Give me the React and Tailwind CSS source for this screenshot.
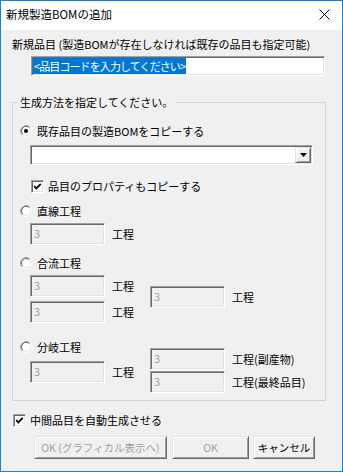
import React from "react";

// classic 3D edges
const sunken =
  "border border-t-[#a0a0a0] border-l-[#a0a0a0] border-r-white border-b-white shadow-[inset_1px_1px_0_#696969,inset_-1px_-1px_0_#e3e3e3]";
const raised =
  "border border-t-[#e3e3e3] border-l-[#e3e3e3] border-r-[#696969] border-b-[#696969] shadow-[inset_1px_1px_0_#fff,inset_-1px_-1px_0_#a0a0a0] bg-[#f0f0f0]";

const Radio = ({ checked, label }) => (
  <div className="flex items-center h-[16px] leading-[16px]">
    <svg width="12" height="12" viewBox="0 0 12 12" className="shrink-0">
      <circle cx="6" cy="6" r="5" fill="#fff" />
      <path d="M2.11 9.89 A5.5 5.5 0 0 1 9.89 2.11" fill="none" stroke="#a0a0a0" />
      <path d="M9.89 2.11 A5.5 5.5 0 0 1 2.11 9.89" fill="none" stroke="#ffffff" />
      <path d="M2.82 9.18 A4.5 4.5 0 0 1 9.18 2.82" fill="none" stroke="#696969" />
      <path d="M9.18 2.82 A4.5 4.5 0 0 1 2.82 9.18" fill="none" stroke="#e3e3e3" />
      {checked && <circle cx="6" cy="6" r="2" fill="#000" />}
    </svg>
    <span className="ml-[5px]">{label}</span>
  </div>
);

const Check = ({ label }) => (
  <div className="flex items-center h-[16px] leading-[16px]">
    <div className={`w-[13px] h-[13px] bg-white ${sunken} flex items-center justify-center shrink-0`}>
      <svg width="9" height="9" viewBox="0 0 9 9">
        <polyline points="1.2,4.2 3.3,6.4 7.8,1.8" fill="none" stroke="#000" strokeWidth="1.8" />
      </svg>
    </div>
    <span className="ml-[4px]">{label}</span>
  </div>
);

const Field = () => (
  <div className={`w-[75px] h-[22px] bg-[#f0f0f0] ${sunken} pl-[3px] pt-[1px] leading-[16px] text-[#a0a0a0] shrink-0`}>
    3
  </div>
);

export default function App() {
  return (
    <div className="w-[343px] h-[472px] border border-[#1883d7] flex flex-col font-['Noto_Sans_CJK_JP',sans-serif] text-[11px] text-black overflow-hidden">
      <div className="h-[29px] bg-white flex items-center justify-between pl-[5px] pr-[12px] pb-[3px] shrink-0">
        <span className="text-[11.5px] leading-[16px]">新規製造BOMの追加</span>
        <svg width="11" height="11" viewBox="0 0 11 11">
          <path d="M0.5 0.5 L10.5 10.5 M10.5 0.5 L0.5 10.5" stroke="#000" strokeWidth="1" />
        </svg>
      </div>

      <div className="flex-1 bg-[#f0f0f0] flex flex-col pt-[6px]">
        <div className="pl-[11px] leading-[16px]">新規品目 (製造BOMが存在しなければ既存の品目も指定可能)</div>
        <div className={`mt-[4px] ml-[30px] w-[294px] h-[20px] bg-white ${sunken} pl-[1px] pt-[1px]`}>
          <span className="inline-block bg-[#0078d7] text-white leading-[16px] px-[1px] tracking-[-0.9px]">&lt;品目コードを入力してください&gt;</span>
        </div>

        <fieldset className="mt-[18px] ml-[11px] w-[314px] border border-[#d5d5d5] pb-[7px]">
          <legend className="ml-[5px] px-[2px] leading-[16px]">生成方法を指定してください。</legend>

          <div className="mt-[13px] pl-[7px]">
            <Radio checked label="既存品目の製造BOMをコピーする" />
          </div>
          <div className={`mt-[6px] ml-[17px] w-[283px] h-[20px] bg-white ${sunken} flex justify-end p-[1px]`}>
            <div className={`w-[16px] h-[16px] ${raised} flex items-center justify-center`}>
              <svg width="7" height="4" viewBox="0 0 7 4">
                <path d="M0 0 H7 L3.5 4 Z" fill="#000" />
              </svg>
            </div>
          </div>
          <div className="mt-[13px] ml-[18px]">
            <Check label="品目のプロパティもコピーする" />
          </div>

          <div className="mt-[9px] pl-[7px]">
            <Radio label="直線工程" />
          </div>
          <div className="mt-[4px] ml-[17px] flex items-center">
            <Field />
            <span className="ml-[7px] leading-[16px]">工程</span>
          </div>

          <div className="mt-[10px] pl-[7px]">
            <Radio label="合流工程" />
          </div>
          <div className="mt-[4px] ml-[17px] flex">
            <div className="w-[120px] flex flex-col gap-[4px]">
              <div className="flex items-center">
                <Field />
                <span className="ml-[7px] leading-[16px]">工程</span>
              </div>
              <div className="flex items-center">
                <Field />
                <span className="ml-[7px] leading-[16px]">工程</span>
              </div>
            </div>
            <div className="mt-[11px] flex items-center self-start">
              <Field />
              <span className="ml-[7px] leading-[16px]">工程</span>
            </div>
          </div>

          <div className="mt-[16px] flex">
            <div className="w-[137px] flex flex-col">
              <div className="pl-[7px]">
                <Radio label="分岐工程" />
              </div>
              <div className="mt-[6px] pl-[17px] flex items-center">
                <Field />
                <span className="ml-[7px] leading-[16px]">工程</span>
              </div>
            </div>
            <div className="mt-[9px] flex flex-col gap-[1px]">
              <div className="flex items-center">
                <Field />
                <span className="ml-[7px] leading-[16px]">工程(副産物)</span>
              </div>
              <div className="flex items-center">
                <Field />
                <span className="ml-[7px] leading-[16px]">工程(最終品目)</span>
              </div>
            </div>
          </div>
        </fieldset>

        <div className="mt-[11px] ml-[12px]">
          <Check label="中間品目を自動生成させる" />
        </div>

        <div className="mt-[8px] ml-[33px] flex">
          <button className={`w-[133px] h-[23px] ${raised} text-[#a0a0a0] leading-[16px] whitespace-nowrap text-[10.5px]`}>OK (グラフィカル表示へ)</button>
          <button className={`ml-[5px] w-[77px] h-[23px] ${raised} text-[#a0a0a0] leading-[16px] text-[10.5px]`}>OK</button>
          <button className={`ml-[4px] w-[62px] h-[23px] ${raised} leading-[16px] whitespace-nowrap text-[10.5px]`}>キャンセル</button>
        </div>
      </div>
    </div>
  );
}
